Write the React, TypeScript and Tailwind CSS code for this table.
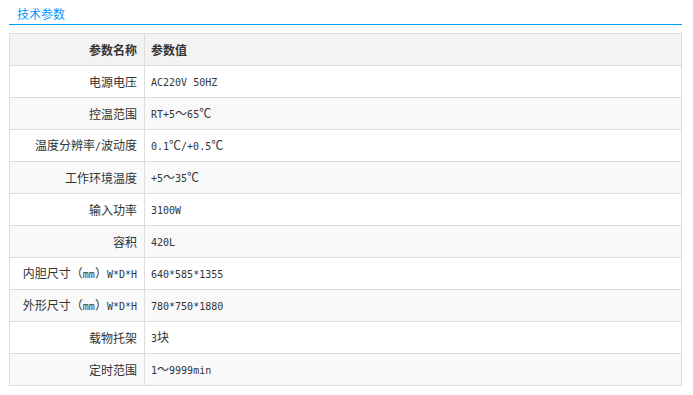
import React from "react";

const rows: [string, string][] = [
  ["电源电压", "AC220V 50HZ"],
  ["控温范围", "RT+5～65℃"],
  ["温度分辨率/波动度", "0.1℃/+0.5℃"],
  ["工作环境温度", "+5～35℃"],
  ["输入功率", "3100W"],
  ["容积", "420L"],
  ["内胆尺寸（mm）W*D*H", "640*585*1355"],
  ["外形尺寸（mm）W*D*H", "780*750*1880"],
  ["载物托架", "3块"],
  ["定时范围", "1～9999min"],
];

function Mixed({ text }: { text: string }) {
  const parts: { latin: boolean; s: string }[] = [];
  for (const ch of text) {
    const latin = ch.charCodeAt(0) < 0x2000;
    const last = parts[parts.length - 1];
    if (last && last.latin === latin) last.s += ch;
    else parts.push({ latin, s: ch });
  }
  return (
    <>
      {parts.map((p, i) =>
        p.latin ? (
          <span
            key={i}
            className="text-[10px]"
            style={{ fontFamily: '"DejaVu Sans Mono", monospace' }}
          >
            {p.s}
          </span>
        ) : (
          <span key={i}>{p.s}</span>
        )
      )}
    </>
  );
}

export default function App() {
  return (
    <div
      className="w-[693px] h-[395px] bg-white text-[12px] text-[#333]"
      style={{ fontFamily: '"Noto Sans CJK SC", "Noto Sans", sans-serif' }}
    >
      <div className="pt-[6px] pl-[9px] w-[682px]">
        <div className="border-b border-[#0099ff] h-[19px] pl-[8px] leading-[16px] text-[12px] text-[#0099ff]">
          技术参数
        </div>
        <table className="mt-[8px] w-[673px] table-fixed border-collapse border border-[#dddddd]">
          <colgroup>
            <col className="w-[135px]" />
            <col />
          </colgroup>
          <tbody>
            <tr className="bg-[#f3f3f3] h-[32px]">
              <td className="border border-[#dddddd] text-right pr-[7px] font-bold leading-[14px]">参数名称</td>
              <td className="border border-[#dddddd] pl-[6px] font-bold leading-[14px]">参数值</td>
            </tr>
            {rows.map(([k, v], i) => (
              <tr key={k} className={(i % 2 === 1 ? "bg-[#f9f9f9]" : "bg-white") + " h-[32px]"}>
                <td className="border border-[#dddddd] text-right pr-[7px] leading-[14px] whitespace-nowrap">
                  <Mixed text={k} />
                </td>
                <td className="border border-[#dddddd] pl-[6px] leading-[14px] whitespace-nowrap">
                  <Mixed text={v} />
                </td>
              </tr>
            ))}
          </tbody>
        </table>
      </div>
    </div>
  );
}
